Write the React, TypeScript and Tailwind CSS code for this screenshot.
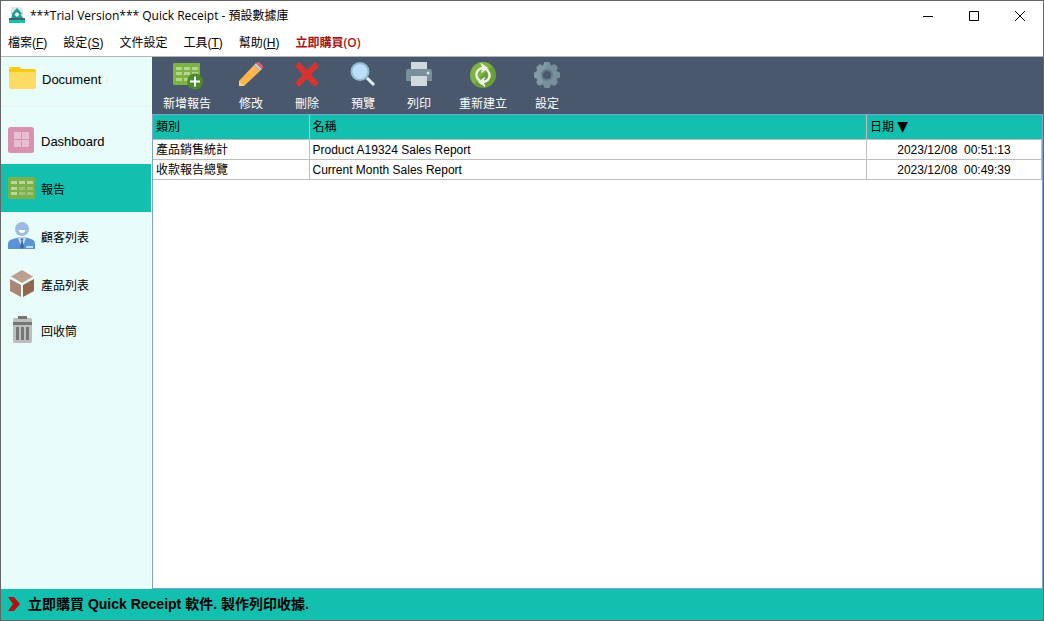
import React, { useState } from "react";

const Logo = () => (
  <svg width="16" height="17" viewBox="0 0 16 17" aria-hidden="true">
    <path d="M2 0h9l3 3v10H2z" fill="#e2e4e4" />
    <path d="M0 11h16v2.500H0z" fill="#3c6670" />
    <path d="M0 13h16v3H0z" fill="#17bfae" />
    <path d="M8 1l5 5.500L10.500 9 8 6 5.500 9H3V6.500z" fill="#1f9f98" />
    <path d="M4 8h8l2 3H2z" fill="#1f9f98" />
    <path d="M8 5l2.500 2.500L8 10 5.500 7.500z" fill="#f2f6f6" />
  </svg>
);

const FolderIcon = () => (
  <svg width="28" height="28" viewBox="0 0 28 28" aria-hidden="true">
    <path d="M1 4q0-2 2-2h8q1 0 2 2h13q2 0 2 2v6H1z" fill="#fbc910" />
    <rect x="1" y="7" width="27" height="17" rx="2" fill="#fcdc62" />
  </svg>
);

const DashboardIcon = () => (
  <svg width="28" height="28" viewBox="0 0 28 28" aria-hidden="true">
    <rect x="0" y="1" width="26" height="26" rx="2.500" fill="#d892af" />
    <path d="M6 6h7v7H6zM14 6h7v7h-7zM6 14h7v7H6zM14 14h7v7h-7z" fill="#e8bfd0" />
  </svg>
);

const cells = [3, 11, 19];
const SheetIcon = () => (
  <svg width="28" height="28" viewBox="0 0 28 28" aria-hidden="true">
    <rect x="0" y="3" width="27" height="22" rx="1" fill="#7cb04b" />
    {[7, 13, 18].map((y, r) =>
      cells.map((x, c) => (
        <rect key={`${x}-${y}`} x={x} y={y} width="6" height="3" fill={r === 0 || c === 0 ? "#b9d49c" : "#9dc47a"} />
      ))
    )}
  </svg>
);

const PersonIcon = () => (
  <svg width="28" height="28" viewBox="0 0 28 28" aria-hidden="true">
    <circle cx="14" cy="7" r="7" fill="#9bbbe6" />
    <path d="M10.500 8h7q-.5 3-3.500 3t-3.500-3z" fill="#fff" />
    <path d="M0 27v-5q0-4 5-5l5-1.500h8l5 1.500q4 1 4 5v5z" fill="#5b94d6" />
    <path d="M9.500 15.500h9L14 26z" fill="#c3d9f2" />
    <path d="M12.500 16.500h3l-1 2.500 1.500 6-2 2-2-2 1.500-6z" fill="#3d659f" />
    <path d="M18 24h7v2h-7z" fill="#c3d9f2" />
  </svg>
);

const BoxIcon = () => (
  <svg width="28" height="28" viewBox="0 0 28 28" aria-hidden="true">
    <path d="M14 0l11 6.500L14 13 3 6.500z" fill="#bda092" />
    <path d="M2 9l11 6v12L2 21z" fill="#ab8674" />
    <path d="M26 9l-11 6v12l11-6z" fill="#91674f" />
  </svg>
);

const TrashIcon = () => (
  <svg width="28" height="28" viewBox="0 0 28 28" aria-hidden="true">
    <path d="M5 3.500q0-1.500 1.500-1.500h16q1.500 0 1.500 1.500V25q0 2-2 2H7q-2 0-2-2z" fill="#bdbdbd" />
    <path d="M10 0h9v3h-9zM5 6h19v3H5zM8 11h3v13H8zM13 11h3v13h-3zM18 11h3v13h-3z" fill="#757575" />
  </svg>
);

const AddSheetIcon = () => (
  <svg width="28" height="28" viewBox="0 0 28 28" overflow="visible" aria-hidden="true">
    <rect x="0" y="2" width="27" height="22" rx="1" fill="#7cb342" />
    {[6, 11, 17].map((y) =>
      cells.map((x) => <rect key={`${x}-${y}`} x={x} y={y} width="6" height="3" fill="#b4d392" />)
    )}
    <circle cx="22" cy="20.500" r="8" fill="#4c8a2e" />
    <path d="M22 15.500v10M17 20.500h10" stroke="#fff" strokeWidth="2" />
  </svg>
);

const PencilIcon = () => (
  <svg width="28" height="28" viewBox="0 0 28 28" aria-hidden="true">
    <path d="M17 4l6 6L7 25H2v-5z" fill="#ffb74d" />
    <path d="M17 4l2-2 6 6-2 2z" fill="#c5cdd2" />
    <path d="M19 2q2-2 4 0l2 2q2 2 0 4z" fill="#e46464" />
    <path d="M2 20l5 5H2z" fill="#fbd08a" />
  </svg>
);

const DeleteIcon = () => (
  <svg width="28" height="28" viewBox="0 0 28 28" aria-hidden="true">
    <path d="M6 1l8 8 8-8 4 4-8 9 8 8-4 4-8-8-8 8-4-4 8-8-8-9z" fill="#d7342f" />
  </svg>
);

const PreviewIcon = () => (
  <svg width="28" height="28" viewBox="0 0 28 28" aria-hidden="true">
    <path d="M16 15l4 4" stroke="#93aebb" strokeWidth="2" />
    <path d="M18 17l7 7" stroke="#e2edf2" strokeWidth="3" />
    <circle cx="11" cy="10.500" r="8.500" fill="#bbdefb" stroke="#91bccb" strokeWidth="2" />
  </svg>
);

const PrinterIcon = () => (
  <svg width="28" height="28" viewBox="0 0 28 28" aria-hidden="true">
    <path d="M6 1h16v8H6z" fill="#cfd8dc" />
    <path d="M3 8h22q2 0 2 3v9H1v-9q0-3 2-3z" fill="#78909c" />
    <circle cx="23" cy="12" r="1.500" fill="#c8eeec" />
    <path d="M6 15h16v10H6z" fill="#d0d9dd" />
  </svg>
);

const RefreshIcon = () => (
  <svg width="28" height="28" viewBox="0 0 28 28" aria-hidden="true">
    <circle cx="14" cy="14" r="13" fill="#689f38" />
    <path d="M14 1a13 13 0 0 0-9 22L23 5a13 13 0 0 0-9-4z" fill="#7cb342" />
    <path d="M11 20q-5-4-3-9 2-4 7-4M17 8q5 4 3 9-2 4-7 4" fill="none" stroke="#f0f5e8" strokeWidth="2.500" />
    <path d="M12 2.500l6.500 4.500-6 4.500 1.500-4.500zM16 25.500L9.500 21l6-4.500L14 21z" fill="#f0f5e8" stroke="#f0f5e8" />
  </svg>
);

const GearIcon = () => (
  <svg width="28" height="28" viewBox="0 0 28 28" aria-hidden="true">
    <g fill="#78909c">
      {[0, 45, 90, 135].map((a) => (
        <path key={a} d="M11.500 1h5l1.500 4v18l-1.500 4h-5L10 23V5z" transform={`rotate(${a} 14 14)`} />
      ))}
    </g>
    <path d="M14 1h-2.500L10 5 5 4 4 9 1 12v4l3 3v5l5-1z" fill="#90a4ae" opacity=".45" />
    <circle cx="14" cy="14" r="6" fill="#607d8b" />
    <circle cx="14" cy="14" r="4" fill="#4a586e" />
  </svg>
);

const menus = [
  { label: "檔案", key: "F" },
  { label: "設定", key: "S" },
  { label: "文件設定", key: "" },
  { label: "工具", key: "T" },
  { label: "幫助", key: "H" },
];

const tools = [
  { label: "新增報告", icon: <AddSheetIcon />, width: "w-[68px]" },
  { label: "修改", icon: <PencilIcon />, width: "w-[52px]" },
  { label: "刪除", icon: <DeleteIcon />, width: "w-[52px]" },
  { label: "預覽", icon: <PreviewIcon />, width: "w-[52px]" },
  { label: "列印", icon: <PrinterIcon />, width: "w-[52px]" },
  { label: "重新建立", icon: <RefreshIcon />, width: "w-[68px]" },
  { label: "設定", icon: <GearIcon />, width: "w-[52px]" },
];

const pages = [
  { label: "Dashboard", icon: <DashboardIcon />, style: "h-12 text-[13px]" },
  { label: "報告", icon: <SheetIcon />, style: "h-12 text-xs" },
  { label: "顧客列表", icon: <PersonIcon />, style: "h-12 text-xs" },
  { label: "產品列表", icon: <BoxIcon />, style: "h-12 text-xs" },
  { label: "回收筒", icon: <TrashIcon />, style: "h-11 text-xs" },
];

const reports = [
  { type: "產品銷售統計", name: "Product A19324 Sales Report", date: "2023/12/08", time: "00:51:13" },
  { type: "收款報告總覽", name: "Current Month Sales Report", date: "2023/12/08", time: "00:49:39" },
];

export default function App() {
  const [page, setPage] = useState("報告");
  return (
    <div className="flex h-screen flex-col border border-[#666] bg-white font-['Liberation_Sans','Noto_Sans_CJK_TC',sans-serif] text-xs text-black">
      <header className="flex h-[29px] shrink-0 items-center pl-2">
        <Logo />
        <h1 className="ml-[5px] flex-1 font-['Open_Sans','Noto_Sans_CJK_TC',sans-serif] text-xs">
          ***Trial Version*** Quick Receipt - 預設數據庫
        </h1>
        <button aria-label="Minimize" className="flex h-full w-[46px] items-center justify-center">
          <svg width="10" height="10" viewBox="0 0 10 10"><path d="M0 5.500h10" stroke="#000" /></svg>
        </button>
        <button aria-label="Maximize" className="flex h-full w-[46px] items-center justify-center">
          <svg width="10" height="10" viewBox="0 0 10 10"><path d="M.5.5h9v9h-9z" fill="none" stroke="#000" /></svg>
        </button>
        <button aria-label="Close" className="flex h-full w-[46px] items-center justify-center">
          <svg width="10" height="10" viewBox="0 0 10 10"><path d="M0 0l10 10M10 0L0 10" stroke="#000" /></svg>
        </button>
      </header>

      <nav className="flex h-[27px] shrink-0 items-center gap-4 border-b border-[#b4b4b4] pl-[7px]">
        {menus.map((m) => (
          <button key={m.label}>
            {m.label}
            {m.key && <>(<u>{m.key}</u>)</>}
          </button>
        ))}
        <button className="font-['Open_Sans','Noto_Sans_CJK_TC',sans-serif] font-semibold text-[#a81414]">立即購買(O)</button>
      </nav>

      <div className="flex min-h-0 flex-1">
        <aside className="flex w-[151px] shrink-0 flex-col border-r border-white bg-[#e8fcfa]">
          <button className="flex h-[43px] items-center gap-[6px] pl-[7px] text-left text-[13px]">
            <FolderIcon />
            <span className="pt-[2px]">Document</span>
          </button>
          <hr className="mt-[6px] border-[#f0eef0]" />
          <div className="mt-[9px] flex flex-col">
            {pages.map((p) => (
              <button
                key={p.label}
                onClick={() => setPage(p.label)}
                className={`flex items-center gap-[5px] pl-[7px] text-left ${p.style} ${page === p.label ? "bg-[#13bfae]" : ""}`}
              >
                {p.icon}
                <span className="pt-[3px]">{p.label}</span>
              </button>
            ))}
          </div>
        </aside>

        <main className="flex min-w-0 flex-1 flex-col">
          <div className="flex h-[57px] shrink-0 gap-1 bg-[#4a586e] pl-px pt-1 text-white">
            {tools.map((t) => (
              <button key={t.icon.type.name} className={`flex flex-col items-center gap-[7px] ${t.width}`}>
                {t.icon}
                <span className="leading-4">{t.label}</span>
              </button>
            ))}
            
          </div>
          <div className="min-h-0 flex-1 overflow-auto border border-[#7da2d6] bg-white">
            <table className="w-full table-fixed border-collapse text-left">
              <colgroup>
                <col className="w-[156px]" />
                <col />
                <col className="w-[175px]" />
              </colgroup>
              <thead>
                <tr className="h-6 border-b border-[#bdbdbd] bg-[#13bfae]">
                  <th className="border-r border-[#bdbdbd] px-[3px] py-0 font-normal">類別</th>
                  <th className="border-r border-[#bdbdbd] px-[3px] py-0 font-normal">名稱</th>
                  <th className="px-[3px] py-0 font-normal">
                    日期 <span className="font-['DejaVu_Sans',sans-serif] text-sm leading-4">▼</span>
                  </th>
                </tr>
              </thead>
              <tbody>
                {reports.map((r) => (
                  <tr key={r.name} className="h-5 border-b border-[#bdbdbd] leading-4">
                    <td className="border-r border-[#bdbdbd] px-[3px] pt-px pb-0">{r.type}</td>
                    <td className="border-r border-[#bdbdbd] px-[3px] pt-px pb-0">{r.name}</td>
                    <td className="whitespace-pre border-r border-[#bdbdbd] pt-px pb-0 text-center">{r.date}{"  "}{r.time}</td>
                  </tr>
                ))}
              </tbody>
            </table>
          </div>
        </main>
      </div>

      <footer className="flex h-[31px] shrink-0 items-center bg-[#13bfae] pb-px pl-[7px]">
        <a href="#buy" className="flex items-center gap-2 text-sm font-bold">
          <svg width="12" height="14" viewBox="0 0 12 14" aria-hidden="true"><path d="M0 0h6l6 7-6 7H0l5-7z" fill="#b01010" /></svg>
          <span>立即購買 Quick Receipt 軟件. 製作列印收據.</span>
        </a>
      </footer>
    </div>
  );
}
